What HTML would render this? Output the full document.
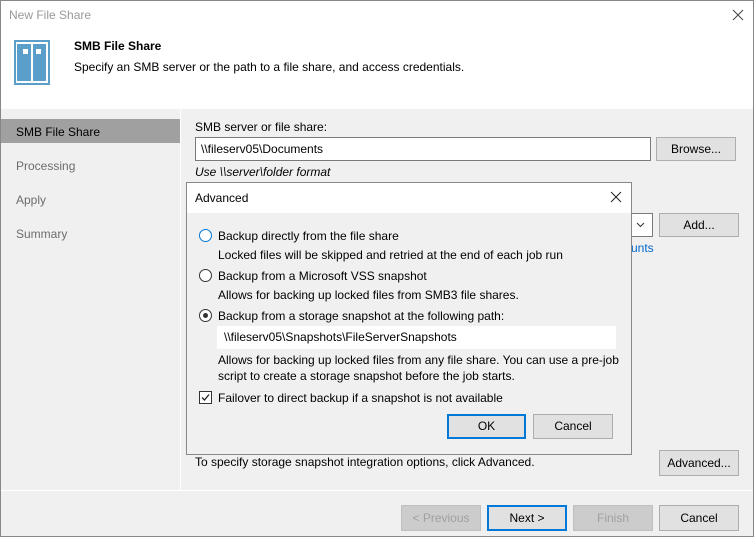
<!DOCTYPE html>
<html><head><meta charset="utf-8"><style>
*{box-sizing:border-box;margin:0;padding:0}
body{width:754px;height:537px;overflow:hidden;background:#f0f0f0;font-family:"Liberation Sans",sans-serif;font-size:12px;color:#000;position:relative}
.a{position:absolute}
.btn{position:absolute;background:#e1e1e1;border:1px solid #adadad;text-align:center;line-height:22px;font-size:12px}
.dis{color:#a0a0a0;background:#cccccc;border-color:#bfbfbf}
.inp{position:absolute;background:#fff;border:1px solid #7a7a7a;padding-left:5px;line-height:22px}
.radio{position:absolute;width:13px;height:13px;border:1px solid #333;border-radius:50%;background:#fff}
</style></head><body>
<div class="a" style="left:0;top:0;width:754px;height:537px;border:1px solid #888;"></div>
<div class="a" style="left:1px;top:1px;width:752px;height:108px;background:#fff"></div>
<div class="a" style="left:9px;top:8px;color:#999;font-size:12px">New File Share</div>
<svg class="a" style="left:732px;top:9px" width="12" height="12"><path d="M1 1L11 11M11 1L1 11" stroke="#444" stroke-width="1"/></svg>
<div class="a" style="left:14px;top:40px;width:36px;height:45px;background:#5b9ec9"></div>
<div class="a" style="left:16px;top:42px;width:32px;height:41px;background:#fff"></div>
<div class="a" style="left:17px;top:44px;width:14px;height:37px;background:#5b9ec9"></div>
<div class="a" style="left:33px;top:44px;width:13px;height:37px;background:#5b9ec9"></div>
<div class="a" style="left:23px;top:49px;width:5px;height:5px;background:#fff"></div>
<div class="a" style="left:36px;top:49px;width:5px;height:5px;background:#fff"></div>
<div class="a" style="left:74px;top:39px;font-weight:bold">SMB File Share</div>
<div class="a" style="left:74px;top:60px">Specify an SMB server or the path to a file share, and access credentials.</div>
<div class="a" style="left:180px;top:109px;width:1px;height:381px;background:#fff"></div>
<div class="a" style="left:1px;top:119px;width:179px;height:24px;background:#a0a0a0"></div>
<div class="a" style="left:16px;top:125px">SMB File Share</div>
<div class="a" style="left:16px;top:159px;color:#6d6d6d">Processing</div>
<div class="a" style="left:16px;top:193px;color:#6d6d6d">Apply</div>
<div class="a" style="left:16px;top:227px;color:#6d6d6d">Summary</div>
<div class="a" style="left:195px;top:120px">SMB server or file share:</div>
<div class="inp" style="left:195px;top:137px;width:456px;height:24px">\\fileserv05\Documents</div>
<div class="btn" style="left:656px;top:137px;width:80px;height:24px">Browse...</div>
<div class="a" style="left:195px;top:165px;font-style:italic">Use \\server\folder format</div>
<div class="inp" style="left:600px;top:213px;width:53px;height:24px"></div>
<svg class="a" style="left:636px;top:222px" width="9" height="6"><path d="M1 1L4.5 4.5L8 1" stroke="#333" fill="none"/></svg>
<div class="btn" style="left:659px;top:213px;width:80px;height:24px">Add...</div>
<div class="a" style="left:631px;top:241px;color:#0066cc">unts</div>
<div class="a" style="left:186px;top:440px;width:446px;height:15px;border:1px solid #888;border-top:none"></div>
<div class="a" style="left:195px;top:455px">To specify storage snapshot integration options, click Advanced.</div>
<div class="btn" style="left:659px;top:450px;width:80px;height:26px;line-height:24px">Advanced...</div>
<div class="a" style="left:1px;top:490px;width:752px;height:1px;background:#fff"></div>
<div class="btn dis" style="left:401px;top:505px;width:80px;height:26px;line-height:24px">&lt; Previous</div>
<div class="btn" style="left:487px;top:505px;width:80px;height:26px;border:2px solid #0078d7;line-height:22px">Next &gt;</div>
<div class="btn dis" style="left:573px;top:505px;width:80px;height:26px;line-height:24px">Finish</div>
<div class="btn" style="left:659px;top:505px;width:80px;height:26px;line-height:24px">Cancel</div>
<!-- dialog -->
<div class="a" style="left:186px;top:182px;width:446px;height:273px;border:1px solid #888;background:#f0f0f0"></div>
<div class="a" style="left:187px;top:183px;width:444px;height:30px;background:#fff"></div>
<div class="a" style="left:195px;top:191px">Advanced</div>
<svg class="a" style="left:610px;top:191px" width="12" height="12"><path d="M1 1L11 11M11 1L1 11" stroke="#222" stroke-width="1"/></svg>
<div class="radio" style="left:199px;top:229px;border-color:#0078d7"></div>
<div class="a" style="left:218px;top:229px">Backup directly from the file share</div>
<div class="a" style="left:218px;top:248px">Locked files will be skipped and retried at the end of each job run</div>
<div class="radio" style="left:199px;top:269px"></div>
<div class="a" style="left:218px;top:269px">Backup from a Microsoft VSS snapshot</div>
<div class="a" style="left:218px;top:288px">Allows for backing up locked files from SMB3 file shares.</div>
<div class="radio" style="left:199px;top:309px"></div>
<div class="a" style="left:203px;top:313px;width:5px;height:5px;border-radius:50%;background:#333"></div>
<div class="a" style="left:218px;top:309px">Backup from a storage snapshot at the following path:</div>
<div class="a" style="left:217px;top:326px;width:399px;height:23px;background:#fff;padding-left:7px;line-height:23px">\\fileserv05\Snapshots\FileServerSnapshots</div>
<div class="a" style="left:218px;top:352px;line-height:16px">Allows for backing up locked files from any file share. You can use a pre-job<br>script to create a storage snapshot before the job starts.</div>
<div class="a" style="left:199px;top:391px;width:13px;height:13px;border:1px solid #333;background:#fff"></div>
<svg class="a" style="left:200px;top:392px" width="11" height="11"><path d="M2 5.5L4.5 8L9 2.5" stroke="#222" stroke-width="1.3" fill="none"/></svg>
<div class="a" style="left:218px;top:391px">Failover to direct backup if a snapshot is not available</div>
<div class="btn" style="left:447px;top:414px;width:79px;height:25px;border:2px solid #0078d7;line-height:21px">OK</div>
<div class="btn" style="left:533px;top:414px;width:80px;height:25px">Cancel</div>
</body></html>
